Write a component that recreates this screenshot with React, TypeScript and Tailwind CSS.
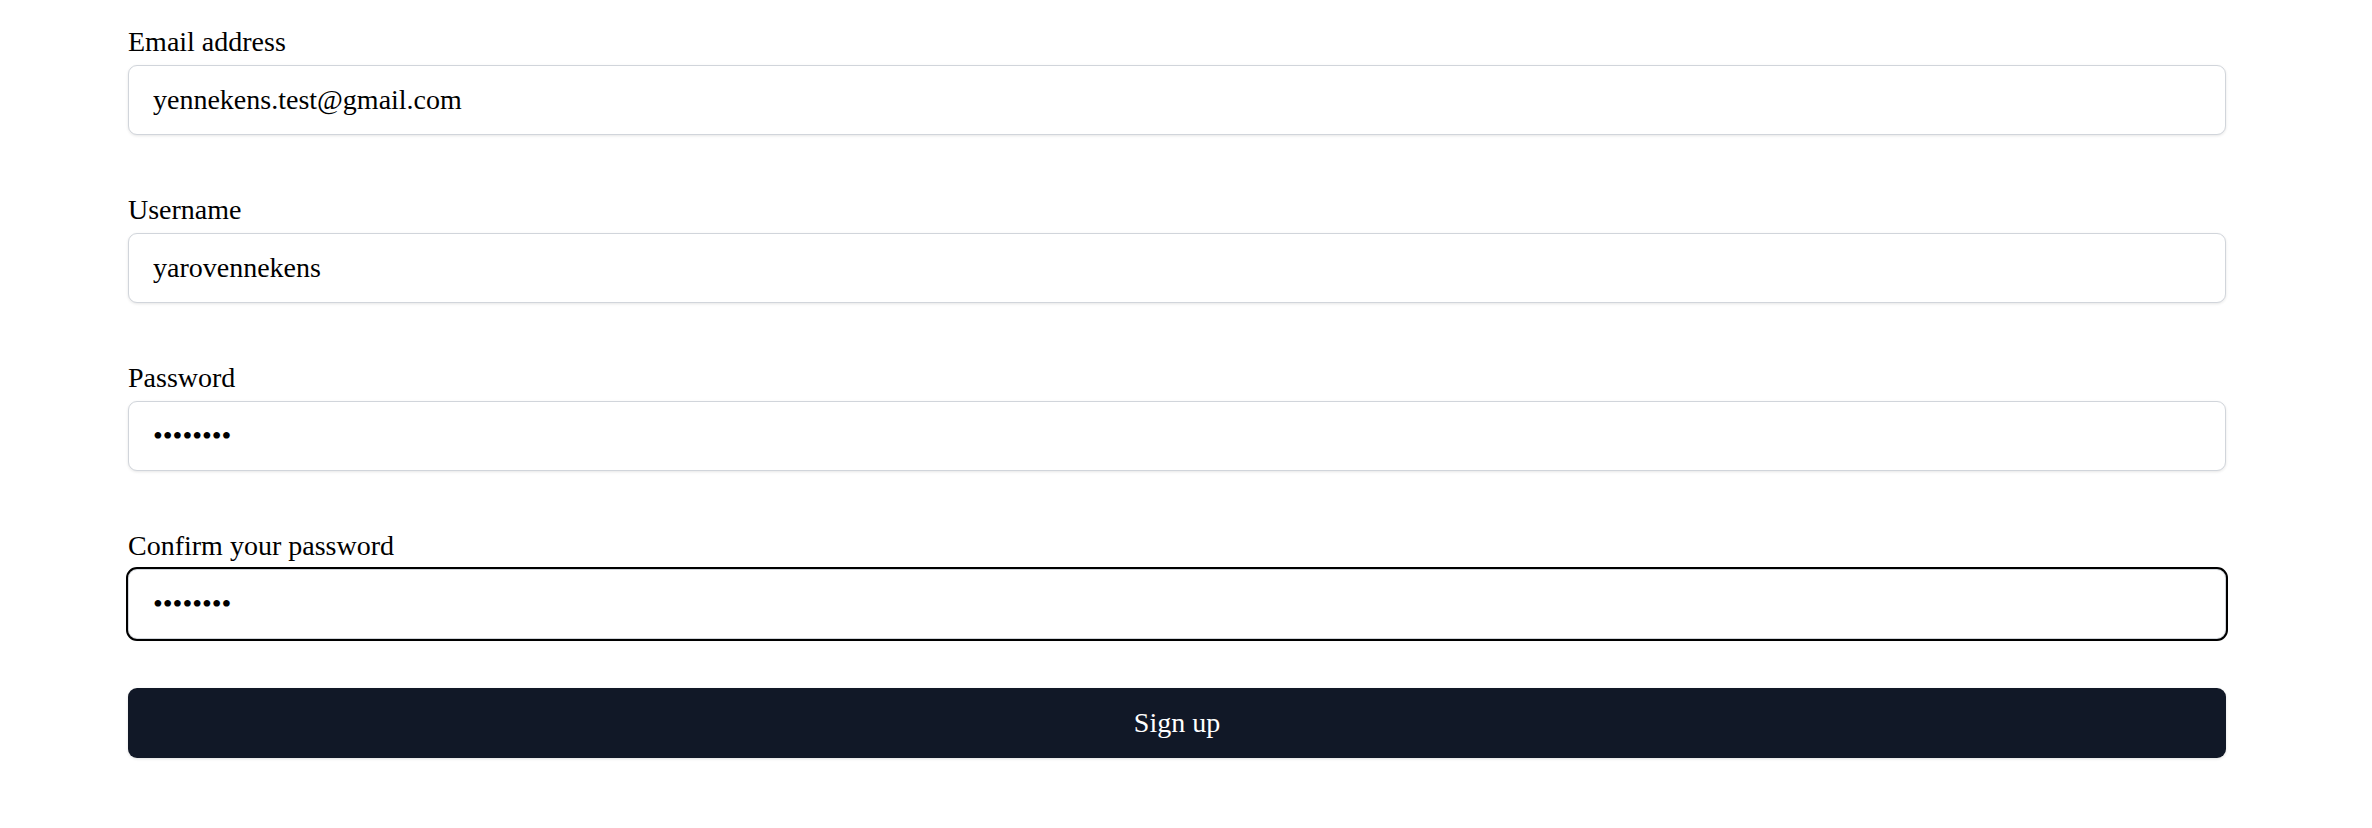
import React from "react";

const serif = { fontFamily: '"Liberation Serif", "Times New Roman", serif' };

function Field({
  label,
  type,
  value,
  focused,
  last,
}: {
  label: string;
  type: string;
  value: string;
  focused?: boolean;
  last?: boolean;
}) {
  return (
    <div className={last ? "flex flex-col" : "flex flex-col mb-[59px]"}>
      <label className="block text-[28px] leading-[31px] text-black">{label}</label>
      <input
        type={type}
        defaultValue={value}
        readOnly
        className={
          "mt-[8px] h-[70px] w-full rounded-[9px] border-[1.5px] border-[#d1d5db] bg-white px-[24px] text-[28px] text-black shadow-[0_1px_3px_rgba(0,0,0,0.1)] outline-none " +
          (focused ? "outline-[2px] outline-solid outline-black outline-offset-0" : "")
        }
        style={serif}
      />
    </div>
  );
}

export default function App() {
  return (
    <div className="min-h-screen bg-white" style={serif}>
      <form className="ml-[128px] w-[2098px] pt-[26px] flex flex-col">
        <Field label="Email address" type="text" value="yennekens.test@gmail.com" />
        <Field label="Username" type="text" value="yarovennekens" />
        <Field label="Password" type="password" value="12345678" />
        <Field label="Confirm your password" type="password" value="12345678" focused last />
        <button
          type="button"
          className="mt-[49px] h-[70px] w-full rounded-[9px] bg-[#111827] text-[28px] text-white shadow-[0_1px_3px_rgba(0,0,0,0.12)]"
          style={serif}
        >
          Sign up
        </button>
      </form>
    </div>
  );
}
